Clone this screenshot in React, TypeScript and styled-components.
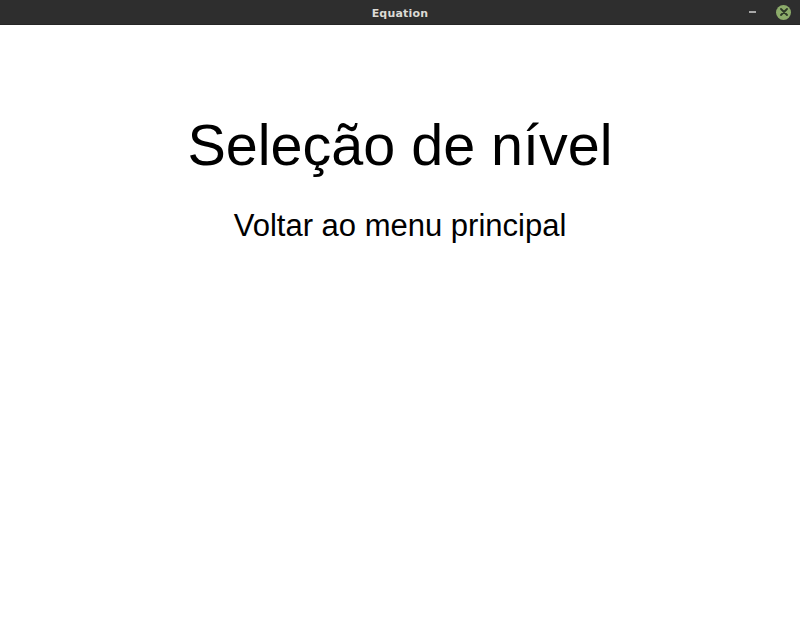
import React from "react";
import styled, { createGlobalStyle } from "styled-components";

const Global = createGlobalStyle`
  html, body { margin: 0; padding: 0; background: #ffffff; }
  body { width: 800px; height: 625px; overflow: hidden; }
`;

const Window = styled.div`
  width: 800px;
  height: 625px;
  display: flex;
  flex-direction: column;
  background: #ffffff;
`;

const TitleBar = styled.div`
  height: 25px;
  flex: none;
  background: #2e2e2e;
  display: grid;
  grid-template-columns: 1fr auto 1fr;
  align-items: center;
  border-bottom: 1px solid #262626;
  box-sizing: border-box;
`;

const TitleText = styled.div`
  grid-column: 2;
  font-family: "DejaVu Sans", sans-serif;
  font-weight: bold;
  font-size: 11px;
  letter-spacing: 0.2px;
  color: #dcdad5;
  padding-top: 3px;
`;

const Controls = styled.div`
  grid-column: 3;
  justify-self: end;
  display: flex;
  align-items: center;
  gap: 20px;
  padding-right: 9px;
`;

const MinButton = styled.div`
  width: 7px;
  height: 2px;
  background: #a8a8a8;
`;

const CloseButton = styled.div`
  width: 15px;
  height: 15px;
  border-radius: 50%;
  background: #8cab6a;
  display: flex;
  align-items: center;
  justify-content: center;
`;

const Content = styled.main`
  flex: 1;
  display: flex;
  flex-direction: column;
  align-items: center;
  padding-top: 92px;
  gap: 35px;
  font-family: "Liberation Sans", Arial, sans-serif;
  color: #000000;
`;

const Heading = styled.h1`
  margin: 0;
  font-weight: normal;
  font-size: 57.5px;
  line-height: 1;
`;

const MenuLink = styled.div`
  font-size: 31px;
  line-height: 1;
  cursor: pointer;
`;

export default function App() {
  return (
    <>
      <Global />
      <Window>
        <TitleBar>
          <TitleText>Equation</TitleText>
          <Controls>
            <MinButton />
            <CloseButton>
              <svg width="8" height="8" viewBox="0 0 8 8">
                <path d="M1 1L7 7M7 1L1 7" stroke="#2e3a28" strokeWidth="1.8" strokeLinecap="round" />
              </svg>
            </CloseButton>
          </Controls>
        </TitleBar>
        <Content>
          <Heading>Seleção de nível</Heading>
          <MenuLink>Voltar ao menu principal</MenuLink>
        </Content>
      </Window>
    </>
  );
}
